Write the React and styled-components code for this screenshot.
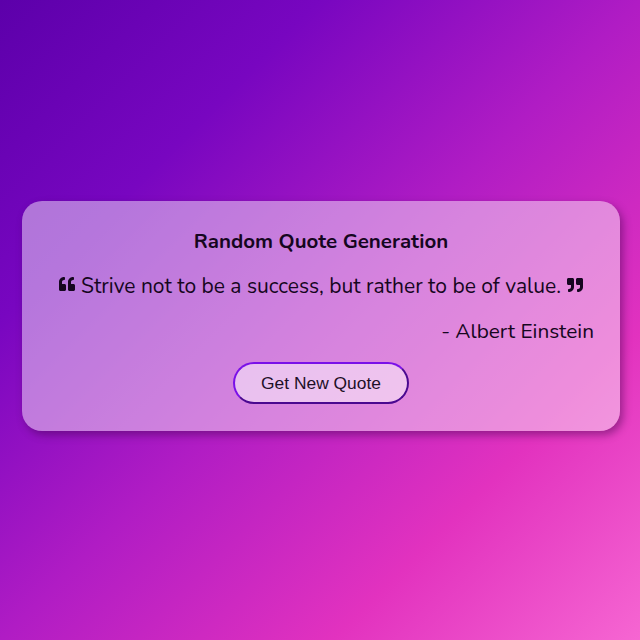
import React from 'react';
import styled, { createGlobalStyle } from 'styled-components';
import { FaQuoteLeft, FaQuoteRight } from 'react-icons/fa';

const GlobalStyle = createGlobalStyle`
  html, body, #root {
    margin: 0;
    padding: 0;
    height: 100%;
  }
  body {
    font-family: "Nunito", "Lato", "Noto Sans", sans-serif;
  }
`;

const Page = styled.div`
  width: 100%;
  height: 100%;
  min-height: 640px;
  display: flex;
  justify-content: center;
  align-items: center;
  background: linear-gradient(135deg, #5c00aa 0%, #7806c0 25%, #b01cc4 50%, #e232bf 76%, #f666d2 100%);
`;

const Card = styled.div`
  width: 598px;
  box-sizing: border-box;
  margin: -8px 0 0 2px;
  padding: 27px 26px 27px;
  border-radius: 20px;
  background: rgba(255, 255, 255, 0.45);
  box-shadow: 3px 4px 8px rgba(60, 0, 70, 0.45);
  display: flex;
  flex-direction: column;
  align-items: center;
  color: #150620;
`;

const Title = styled.h1`
  margin: 0;
  font-size: 20.5px;
  font-weight: 700;
  line-height: 26px;
`;

const Quote = styled.p`
  margin: 19px 0 0;
  font-size: 21px;
  line-height: 26px;
  display: flex;
  align-items: center;
  gap: 6px;
  white-space: nowrap;
`;

const Mark = styled.span`
  display: inline-flex;
  font-size: 16px;
  margin-top: ${props => (props.$end ? '-2px' : '-4px')};
`;

const Author = styled.p`
  margin: 19px 0 0;
  align-self: flex-end;
  font-size: 20.8px;
  line-height: 26px;
`;

const Button = styled.button`
  margin-top: 18px;
  width: 176px;
  height: 42px;
  border-radius: 21px;
  border: 2px solid #7a10e8;
  border-right-color: #4a0890;
  border-bottom-color: #4a0890;
  background: rgba(255, 255, 255, 0.5);
  font-family: "Liberation Sans", Arial, sans-serif;
  font-size: 17.4px;
  color: #1e1028;
  cursor: pointer;
`;

const App = () => {
  return (
    <>
      <GlobalStyle />
      <Page>
        <Card>
          <Title>Random Quote Generation</Title>
          <Quote>
            <Mark><FaQuoteLeft /></Mark>
            Strive not to be a success, but rather to be of value.
            <Mark $end><FaQuoteRight /></Mark>
          </Quote>
          <Author>- Albert Einstein</Author>
          <Button>Get New Quote</Button>
        </Card>
      </Page>
    </>
  );
};

export default App;
